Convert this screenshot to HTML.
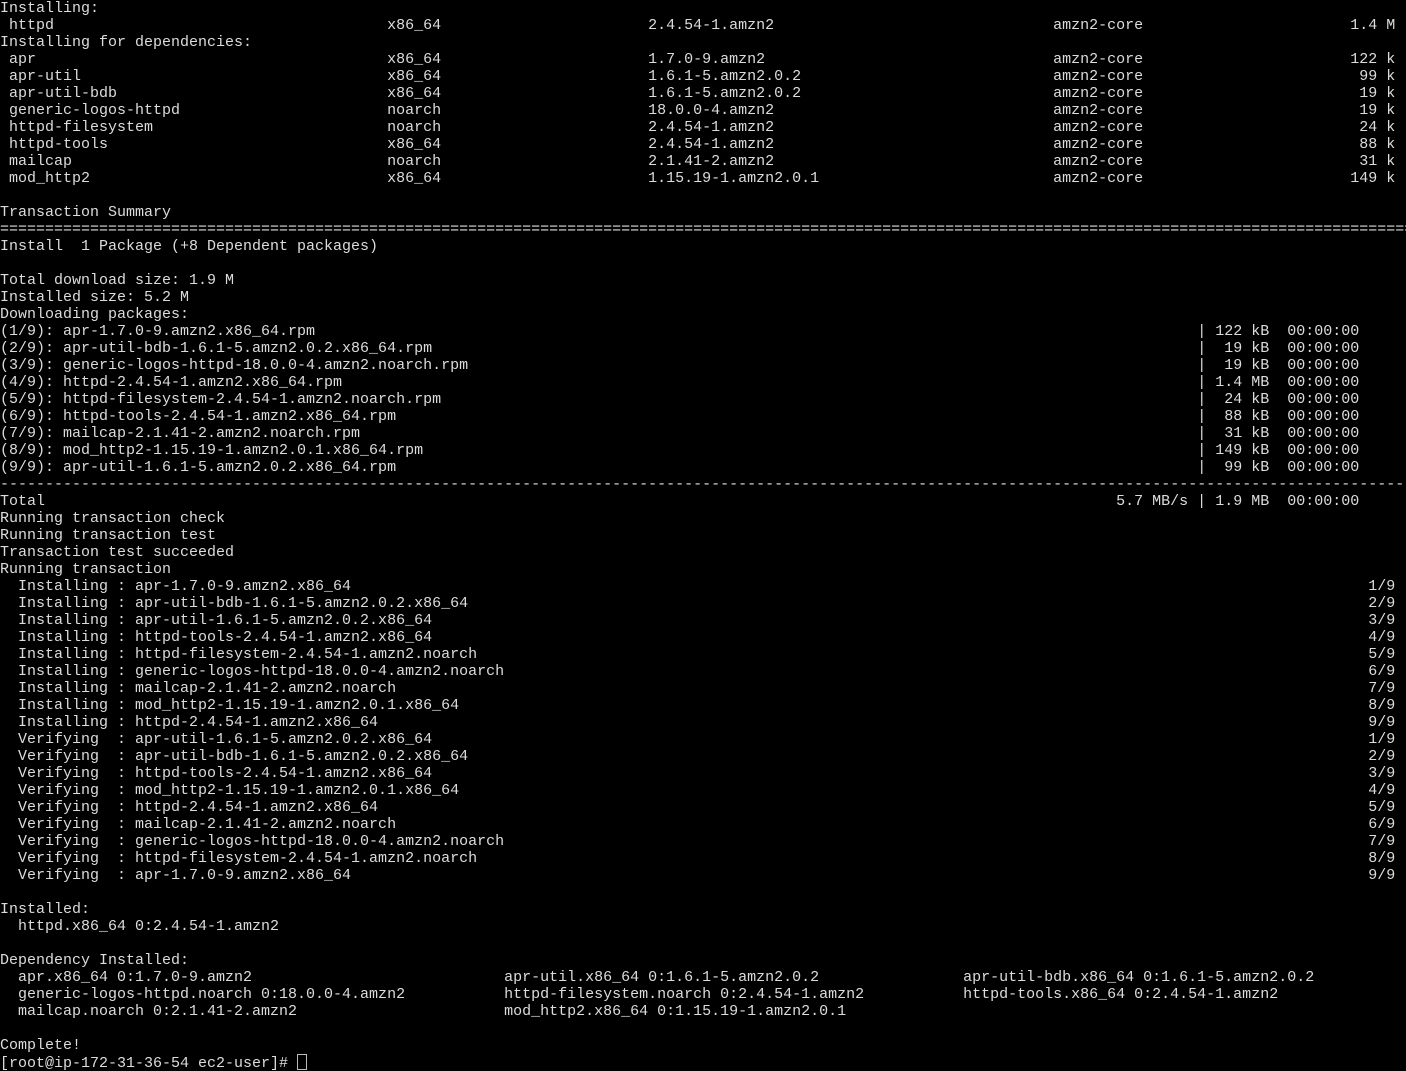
<!DOCTYPE html>
<html><head><meta charset="utf-8"><style>
html,body{margin:0;padding:0;background:#000;}
body{width:1406px;height:1069px;overflow:hidden;font-family:"Liberation Mono","DejaVu Sans Mono",monospace;font-size:15px;color:#dcdcdc;}
.r{height:17px;line-height:17px;white-space:pre;overflow:hidden;}
.r span{display:inline-block;white-space:pre;}
.n{width:43ch}.a{width:29ch}.v{width:45ch}.p{width:33ch}.s{width:5ch;text-align:right}
.d{width:133ch}.i{width:152ch}
.c1{width:56ch}.c2{width:51ch}
.cur{display:inline-block;width:8px;height:14px;border:1px solid #bbb;vertical-align:-3px;}
</style></head><body>
<div class="r">Installing:</div>
<div class="r"><span class="n"> httpd</span><span class="a">x86_64</span><span class="v">2.4.54-1.amzn2</span><span class="p">amzn2-core</span><span class="s">1.4 M</span></div>
<div class="r">Installing for dependencies:</div>
<div class="r"><span class="n"> apr</span><span class="a">x86_64</span><span class="v">1.7.0-9.amzn2</span><span class="p">amzn2-core</span><span class="s">122 k</span></div>
<div class="r"><span class="n"> apr-util</span><span class="a">x86_64</span><span class="v">1.6.1-5.amzn2.0.2</span><span class="p">amzn2-core</span><span class="s">99 k</span></div>
<div class="r"><span class="n"> apr-util-bdb</span><span class="a">x86_64</span><span class="v">1.6.1-5.amzn2.0.2</span><span class="p">amzn2-core</span><span class="s">19 k</span></div>
<div class="r"><span class="n"> generic-logos-httpd</span><span class="a">noarch</span><span class="v">18.0.0-4.amzn2</span><span class="p">amzn2-core</span><span class="s">19 k</span></div>
<div class="r"><span class="n"> httpd-filesystem</span><span class="a">noarch</span><span class="v">2.4.54-1.amzn2</span><span class="p">amzn2-core</span><span class="s">24 k</span></div>
<div class="r"><span class="n"> httpd-tools</span><span class="a">x86_64</span><span class="v">2.4.54-1.amzn2</span><span class="p">amzn2-core</span><span class="s">88 k</span></div>
<div class="r"><span class="n"> mailcap</span><span class="a">noarch</span><span class="v">2.1.41-2.amzn2</span><span class="p">amzn2-core</span><span class="s">31 k</span></div>
<div class="r"><span class="n"> mod_http2</span><span class="a">x86_64</span><span class="v">1.15.19-1.amzn2.0.1</span><span class="p">amzn2-core</span><span class="s">149 k</span></div>
<div class="r"> </div>
<div class="r">Transaction Summary</div>
<div class="r">================================================================================================================================================================================</div>
<div class="r">Install  1 Package (+8 Dependent packages)</div>
<div class="r"> </div>
<div class="r">Total download size: 1.9 M</div>
<div class="r">Installed size: 5.2 M</div>
<div class="r">Downloading packages:</div>
<div class="r"><span class="d">(1/9): apr-1.7.0-9.amzn2.x86_64.rpm</span>| 122 kB  00:00:00</div>
<div class="r"><span class="d">(2/9): apr-util-bdb-1.6.1-5.amzn2.0.2.x86_64.rpm</span>|  19 kB  00:00:00</div>
<div class="r"><span class="d">(3/9): generic-logos-httpd-18.0.0-4.amzn2.noarch.rpm</span>|  19 kB  00:00:00</div>
<div class="r"><span class="d">(4/9): httpd-2.4.54-1.amzn2.x86_64.rpm</span>| 1.4 MB  00:00:00</div>
<div class="r"><span class="d">(5/9): httpd-filesystem-2.4.54-1.amzn2.noarch.rpm</span>|  24 kB  00:00:00</div>
<div class="r"><span class="d">(6/9): httpd-tools-2.4.54-1.amzn2.x86_64.rpm</span>|  88 kB  00:00:00</div>
<div class="r"><span class="d">(7/9): mailcap-2.1.41-2.amzn2.noarch.rpm</span>|  31 kB  00:00:00</div>
<div class="r"><span class="d">(8/9): mod_http2-1.15.19-1.amzn2.0.1.x86_64.rpm</span>| 149 kB  00:00:00</div>
<div class="r"><span class="d">(9/9): apr-util-1.6.1-5.amzn2.0.2.x86_64.rpm</span>|  99 kB  00:00:00</div>
<div class="r">--------------------------------------------------------------------------------------------------------------------------------------------------------------------------------</div>
<div class="r"><span style="width:124ch">Total</span>5.7 MB/s | 1.9 MB  00:00:00</div>
<div class="r">Running transaction check</div>
<div class="r">Running transaction test</div>
<div class="r">Transaction test succeeded</div>
<div class="r">Running transaction</div>
<div class="r"><span class="i">  Installing : apr-1.7.0-9.amzn2.x86_64</span>1/9</div>
<div class="r"><span class="i">  Installing : apr-util-bdb-1.6.1-5.amzn2.0.2.x86_64</span>2/9</div>
<div class="r"><span class="i">  Installing : apr-util-1.6.1-5.amzn2.0.2.x86_64</span>3/9</div>
<div class="r"><span class="i">  Installing : httpd-tools-2.4.54-1.amzn2.x86_64</span>4/9</div>
<div class="r"><span class="i">  Installing : httpd-filesystem-2.4.54-1.amzn2.noarch</span>5/9</div>
<div class="r"><span class="i">  Installing : generic-logos-httpd-18.0.0-4.amzn2.noarch</span>6/9</div>
<div class="r"><span class="i">  Installing : mailcap-2.1.41-2.amzn2.noarch</span>7/9</div>
<div class="r"><span class="i">  Installing : mod_http2-1.15.19-1.amzn2.0.1.x86_64</span>8/9</div>
<div class="r"><span class="i">  Installing : httpd-2.4.54-1.amzn2.x86_64</span>9/9</div>
<div class="r"><span class="i">  Verifying  : apr-util-1.6.1-5.amzn2.0.2.x86_64</span>1/9</div>
<div class="r"><span class="i">  Verifying  : apr-util-bdb-1.6.1-5.amzn2.0.2.x86_64</span>2/9</div>
<div class="r"><span class="i">  Verifying  : httpd-tools-2.4.54-1.amzn2.x86_64</span>3/9</div>
<div class="r"><span class="i">  Verifying  : mod_http2-1.15.19-1.amzn2.0.1.x86_64</span>4/9</div>
<div class="r"><span class="i">  Verifying  : httpd-2.4.54-1.amzn2.x86_64</span>5/9</div>
<div class="r"><span class="i">  Verifying  : mailcap-2.1.41-2.amzn2.noarch</span>6/9</div>
<div class="r"><span class="i">  Verifying  : generic-logos-httpd-18.0.0-4.amzn2.noarch</span>7/9</div>
<div class="r"><span class="i">  Verifying  : httpd-filesystem-2.4.54-1.amzn2.noarch</span>8/9</div>
<div class="r"><span class="i">  Verifying  : apr-1.7.0-9.amzn2.x86_64</span>9/9</div>
<div class="r"> </div>
<div class="r">Installed:</div>
<div class="r">  httpd.x86_64 0:2.4.54-1.amzn2</div>
<div class="r"> </div>
<div class="r">Dependency Installed:</div>
<div class="r"><span class="c1">  apr.x86_64 0:1.7.0-9.amzn2</span><span class="c2">apr-util.x86_64 0:1.6.1-5.amzn2.0.2</span>apr-util-bdb.x86_64 0:1.6.1-5.amzn2.0.2</div>
<div class="r"><span class="c1">  generic-logos-httpd.noarch 0:18.0.0-4.amzn2</span><span class="c2">httpd-filesystem.noarch 0:2.4.54-1.amzn2</span>httpd-tools.x86_64 0:2.4.54-1.amzn2</div>
<div class="r"><span class="c1">  mailcap.noarch 0:2.1.41-2.amzn2</span><span class="c2">mod_http2.x86_64 0:1.15.19-1.amzn2.0.1</span></div>
<div class="r"> </div>
<div class="r">Complete!</div>
<div class="r">[root@ip-172-31-36-54 ec2-user]# <span class="cur"></span></div>
</body></html>
